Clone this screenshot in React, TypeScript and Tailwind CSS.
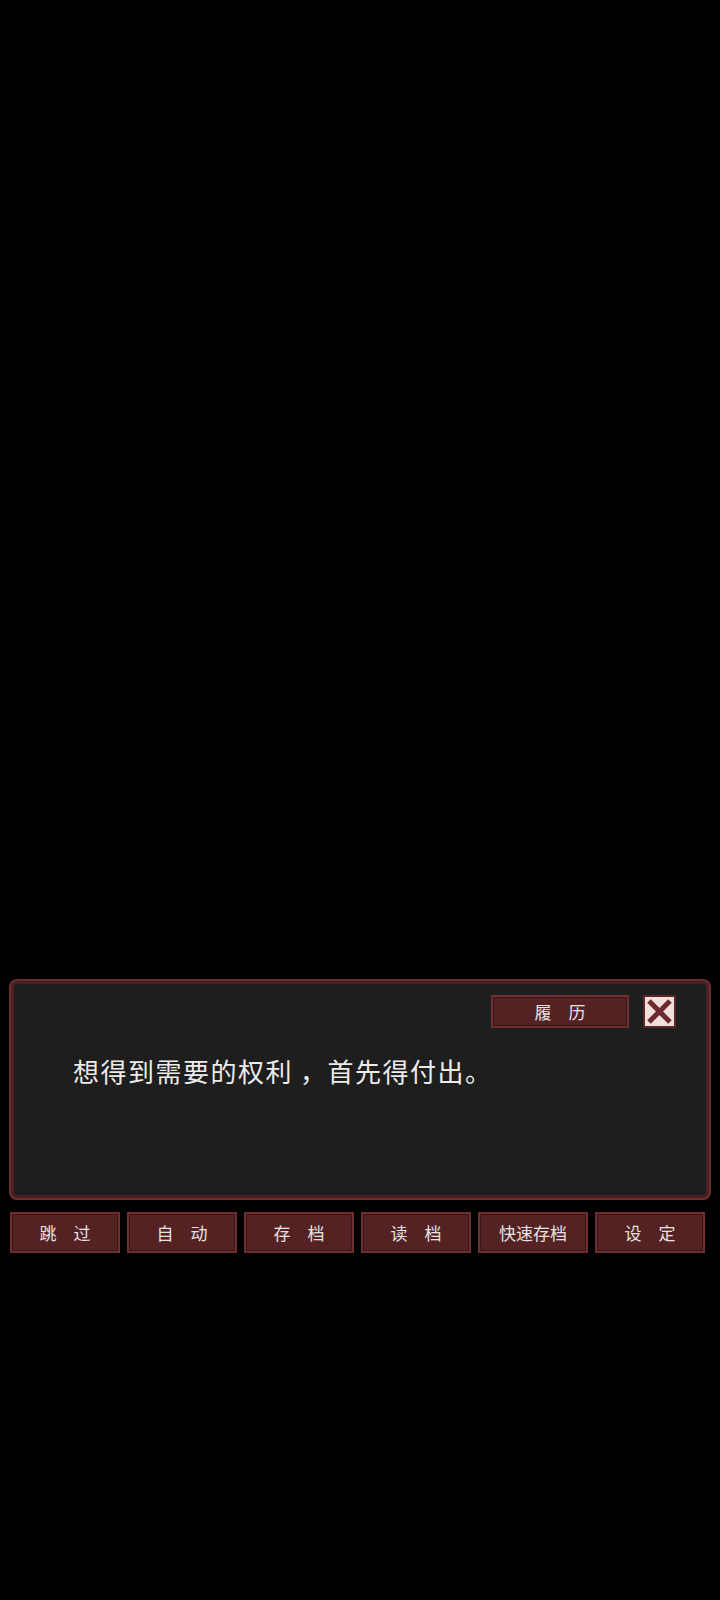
const buttons = ["跳　过", "自　动", "存　档", "读　档", "快速存档", "设　定"];

function MenuButton({ label, className = "" }: { label: string; className?: string }) {
  return (
    <button
      className={`flex items-center justify-center border-2 border-[#6e2f2f] bg-[#542223] shadow-[inset_0_0_0_1px_#3a1616] text-[17px] leading-none text-[#e8e2e2] ${className}`}
    >
      {label}
    </button>
  );
}

function CloseButton() {
  return (
    <button className="size-[33px] border-2 border-[#5a2626] bg-[#f3dede]">
      <svg viewBox="0 0 29 29" className="size-full">
        <path d="M4 4L25 25M25 4L4 25" stroke="#6b2a2b" strokeWidth="5" strokeLinecap="butt" />
      </svg>
    </button>
  );
}

export default function App() {
  return (
    <div
      className="min-h-[1600px] bg-black px-[9px] pt-[979px]"
      style={{ fontFamily: '"Noto Sans CJK SC", "Noto Sans", sans-serif' }}
    >
      <div className="rounded-[8px] bg-[#6c2f2f] p-[2px]">
        <div className="h-[217px] rounded-[6px] border-[3px] border-[#4a1f1f] bg-[#1e1e1e] pl-[59px] pr-[30px] pt-[11px]">
          <div className="flex items-center justify-end gap-[14px]">
            <MenuButton label="履　历" className="h-[33px] w-[138px]" />
            <CloseButton />
          </div>
          <p className="mt-[23px] text-[26px] leading-[39px] tracking-[1.5px] text-[#ececec]">
            想得到需要的权利<span className="ml-[7px]">，</span>首先得付出。
          </p>
        </div>
      </div>

      <div className="mt-[12px] flex gap-[7px] pl-[1px]">
        {buttons.map((label) => (
          <MenuButton key={label} label={label} className="h-[41px] w-[110px]" />
        ))}
      </div>
    </div>
  );
}
